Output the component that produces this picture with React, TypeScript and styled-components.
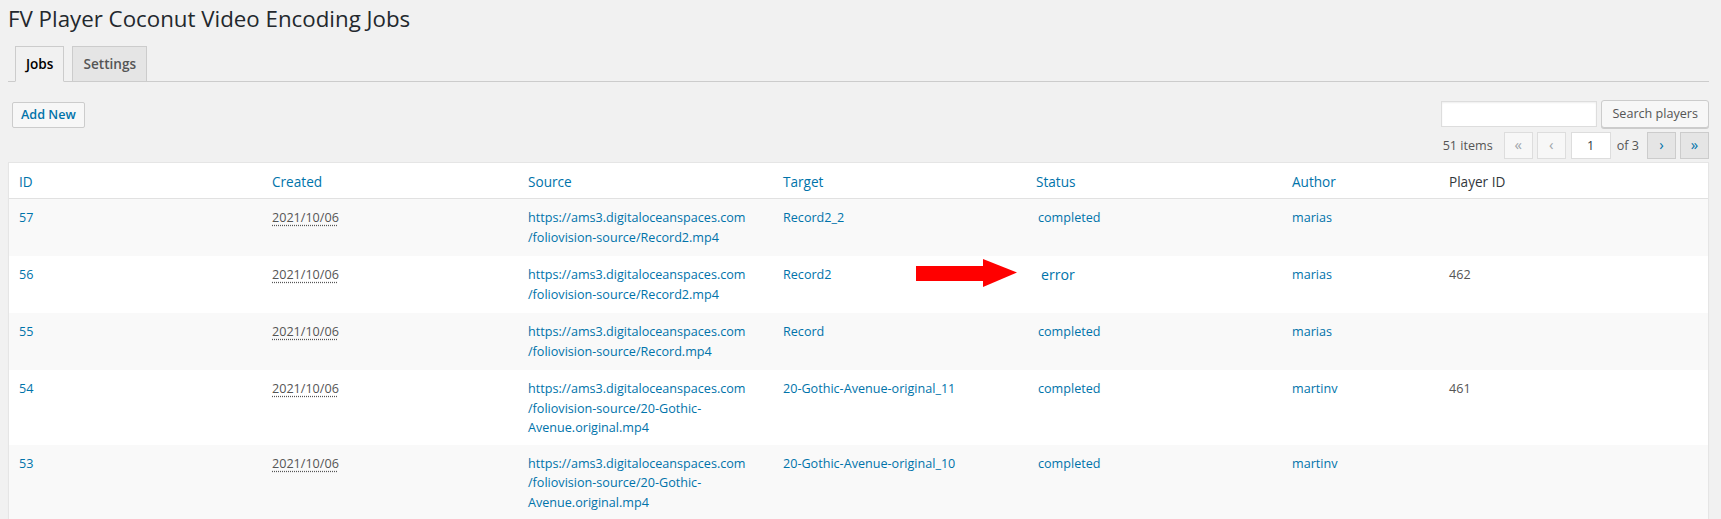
import React from 'react';
import styled, { createGlobalStyle } from 'styled-components';

type Job = {
  id: number,
  created: string,
  file: string,
  target: string,
  status: string,
  author: string,
  playerId?: string
}

const jobs: Job[] = [
  { id: 57, created: '2021/10/06', file: 'Record2.mp4', target: 'Record2_2', status: 'completed', author: 'marias' },
  { id: 56, created: '2021/10/06', file: 'Record2.mp4', target: 'Record2', status: 'error', author: 'marias', playerId: '462' },
  { id: 55, created: '2021/10/06', file: 'Record.mp4', target: 'Record', status: 'completed', author: 'marias' },
  { id: 54, created: '2021/10/06', file: '20-Gothic-Avenue.original.mp4', target: '20-Gothic-Avenue-original_11', status: 'completed', author: 'martinv', playerId: '461' },
  { id: 53, created: '2021/10/06', file: '20-Gothic-Avenue.original.mp4', target: '20-Gothic-Avenue-original_10', status: 'completed', author: 'martinv' },
];

const columns = [
  { label: 'ID', width: 253, sortable: true },
  { label: 'Created', width: 256, sortable: true },
  { label: 'Source', width: 255, sortable: true },
  { label: 'Target', width: 253, sortable: true },
  { label: 'Status', width: 256, sortable: true },
  { label: 'Author', width: 157, sortable: true },
  { label: 'Player ID', sortable: false },
];

const GlobalStyle = createGlobalStyle`
  html, body {
    margin: 0;
    padding: 0;
    overflow: hidden;
  }
  body {
    background: #f1f1f1;
    font-family: "Open Sans", "Noto Sans", sans-serif;
    font-size: 12.6px;
    color: #444;
  }
`;

const Wrap = styled.div`
  padding: 0 12px 0 8px;
`;

const Title = styled.h1`
  margin: 0;
  padding: 4px 0 0;
  font-size: 22.3px;
  font-weight: 400;
  line-height: 30px;
  color: #23282d;
`;

const TabBar = styled.nav`
  display: flex;
  gap: 8px;
  margin-top: 12px;
  padding-left: 7px;
  border-bottom: 1px solid #ccc;
`;

const Tab = styled.a<{ $active?: boolean }>`
  margin-bottom: -1px;
  padding: 5px 10px;
  border: 1px solid #ccc;
  border-bottom: 1px solid ${({ $active }) => $active ? '#f1f1f1' : '#ccc'};
  background: ${({ $active }) => $active ? '#f1f1f1' : '#e5e5e5'};
  color: ${({ $active }) => $active ? '#000' : '#555'};
  font-size: 13.6px;
  font-weight: 600;
  line-height: 24px;
  text-decoration: none;
`;

const Toolbar = styled.div`
  display: flex;
  justify-content: space-between;
  align-items: flex-start;
  margin-top: 18px;
`;

const AddNew = styled.a`
  margin: 2px 0 0 4px;
  padding: 4px 8px;
  border: 1px solid #ccc;
  border-radius: 2px;
  background: #f7f7f7;
  color: #0073aa;
  font-size: 12.6px;
  font-weight: 600;
  line-height: 16px;
  text-decoration: none;
`;

const SearchBox = styled.div`
  display: flex;
  align-items: flex-start;
  gap: 4px;
`;

const SearchInput = styled.input`
  box-sizing: border-box;
  width: 156px;
  height: 26px;
  margin-top: 1px;
  border: 1px solid #ddd;
  background: #fff;
  box-shadow: inset 0 1px 2px rgba(0, 0, 0, 0.07);
  outline: none;
`;

const Button = styled.button`
  box-sizing: border-box;
  height: 28px;
  padding: 0 10px 1px;
  border: 1px solid #ccc;
  border-radius: 3px;
  background: #f7f7f7;
  box-shadow: 0 1px 0 #ccc;
  color: #555;
  font-family: inherit;
  font-size: 12.6px;
  line-height: 26px;
`;

const TableNav = styled.div`
  display: flex;
  justify-content: flex-end;
  align-items: center;
  height: 27px;
  margin: 4px 0 3px;
  color: #555;
`;

const ItemCount = styled.span`
  margin-right: 7px;
`;

const PageButton = styled.span<{ $disabled?: boolean }>`
  box-sizing: border-box;
  display: inline-flex;
  align-items: center;
  justify-content: center;
  width: 29px;
  height: 27px;
  margin-left: 4px;
  padding-bottom: 2px;
  border: 1px solid ${({ $disabled }) => $disabled ? '#ddd' : '#ccc'};
  background: ${({ $disabled }) => $disabled ? '#f7f7f7' : '#e5e5e5'};
  color: ${({ $disabled }) => $disabled ? '#a0a5aa' : '#0073aa'};
  font-size: 15px;
  line-height: 1;
`;

const PageInput = styled.input`
  box-sizing: border-box;
  width: 40px;
  height: 27px;
  margin: 0 6px 0 5px;
  border: 1px solid #ddd;
  background: #fff;
  color: #32373c;
  font-family: inherit;
  font-size: 12.6px;
  text-align: center;
  outline: none;
`;

const PageTotal = styled.span`
  margin-right: 4px;
`;

const Table = styled.table`
  width: 100%;
  table-layout: fixed;
  border-collapse: separate;
  border-spacing: 0;
  background: #fff;
  border: 1px solid #e5e5e5;
  box-shadow: 0 1px 1px rgba(0, 0, 0, 0.04);
`;

const Col = styled.col<{ $width?: number }>`
  width: ${({ $width }) => $width ? `${$width}px` : 'auto'};
`;

const Th = styled.th`
  padding: 9px 10px 7px;
  border-bottom: 1px solid #e1e1e1;
  color: #32373c;
  font-size: 13.6px;
  font-weight: 400;
  line-height: 19px;
  text-align: left;
`;

const HeadLink = styled.a`
  color: #0073aa;
  text-decoration: none;
`;

const Row = styled.tr<{ $alt?: boolean }>`
  height: 57px;
  background: ${({ $alt }) => $alt ? '#f9f9f9' : '#fff'};
`;

const Td = styled.td`
  padding: 9px 10px 7px;
  vertical-align: top;
  color: #555;
  font-size: 12.6px;
  line-height: 19.5px;
`;

const StatusTd = styled(Td)`
  position: relative;
`;

const Link = styled.a`
  color: #0073aa;
  text-decoration: none;
`;

const StatusLink = styled(Link)<{ $edited?: boolean }>`
  margin-left: ${({ $edited }) => $edited ? '5px' : '2px'};
  font-size: ${({ $edited }) => $edited ? '14.2px' : '12.6px'};
`;

const DateAbbr = styled.abbr`
  color: #555;
  text-decoration: underline dotted;
  text-underline-offset: 3px;
`;

const Arrow = styled.svg`
  position: absolute;
  left: -110px;
  top: 3px;
`;

const RedArrow = () => (
  <Arrow width="101" height="28" viewBox="0 0 101 28">
    <rect x="0" y="7" width="68" height="15" fill="#f00" />
    <polygon points="67,0 101,13.5 67,28" fill="#f00" />
  </Arrow>
);

const Source: React.FC<{ file: string }> = ({ file }) => (
  <Link href="#">
    {'https://ams3.digitaloceanspaces.com'}
    <br />
    {`/foliovision-source/${file}`}
  </Link>
);

const App: React.FC = () => {
  return (
    <>
      <GlobalStyle />
      <Wrap>
        <Title>FV Player Coconut Video Encoding Jobs</Title>
        <TabBar>
          <Tab $active>Jobs</Tab>
          <Tab>Settings</Tab>
        </TabBar>

        <Toolbar>
          <AddNew href="#">Add New</AddNew>
          <SearchBox>
            <SearchInput type="search" />
            <Button>Search players</Button>
          </SearchBox>
        </Toolbar>

        <TableNav>
          <ItemCount>51 items</ItemCount>
          <PageButton $disabled>«</PageButton>
          <PageButton $disabled>‹</PageButton>
          <PageInput defaultValue="1" />
          <PageTotal>of 3</PageTotal>
          <PageButton>›</PageButton>
          <PageButton>»</PageButton>
        </TableNav>

        <Table>
          <colgroup>
            {columns.map(c => <Col key={c.label} $width={c.width} />)}
          </colgroup>
          <thead>
            <tr>
              {columns.map(c => (
                <Th key={c.label}>
                  {c.sortable ? <HeadLink href="#">{c.label}</HeadLink> : c.label}
                </Th>
              ))}
            </tr>
          </thead>
          <tbody>
            {jobs.map((job, i) => (
              <Row key={job.id} $alt={i % 2 === 0}>
                <Td><Link href="#">{job.id}</Link></Td>
                <Td><DateAbbr title={job.created}>{job.created}</DateAbbr></Td>
                <Td><Source file={job.file} /></Td>
                <Td><Link href="#">{job.target}</Link></Td>
                <StatusTd>
                  {job.status === 'error' && <RedArrow />}
                  <StatusLink href="#" $edited={job.status === 'error'}>{job.status}</StatusLink>
                </StatusTd>
                <Td><Link href="#">{job.author}</Link></Td>
                <Td>{job.playerId}</Td>
              </Row>
            ))}
          </tbody>
        </Table>
      </Wrap>
    </>
  );
};

export default App;
